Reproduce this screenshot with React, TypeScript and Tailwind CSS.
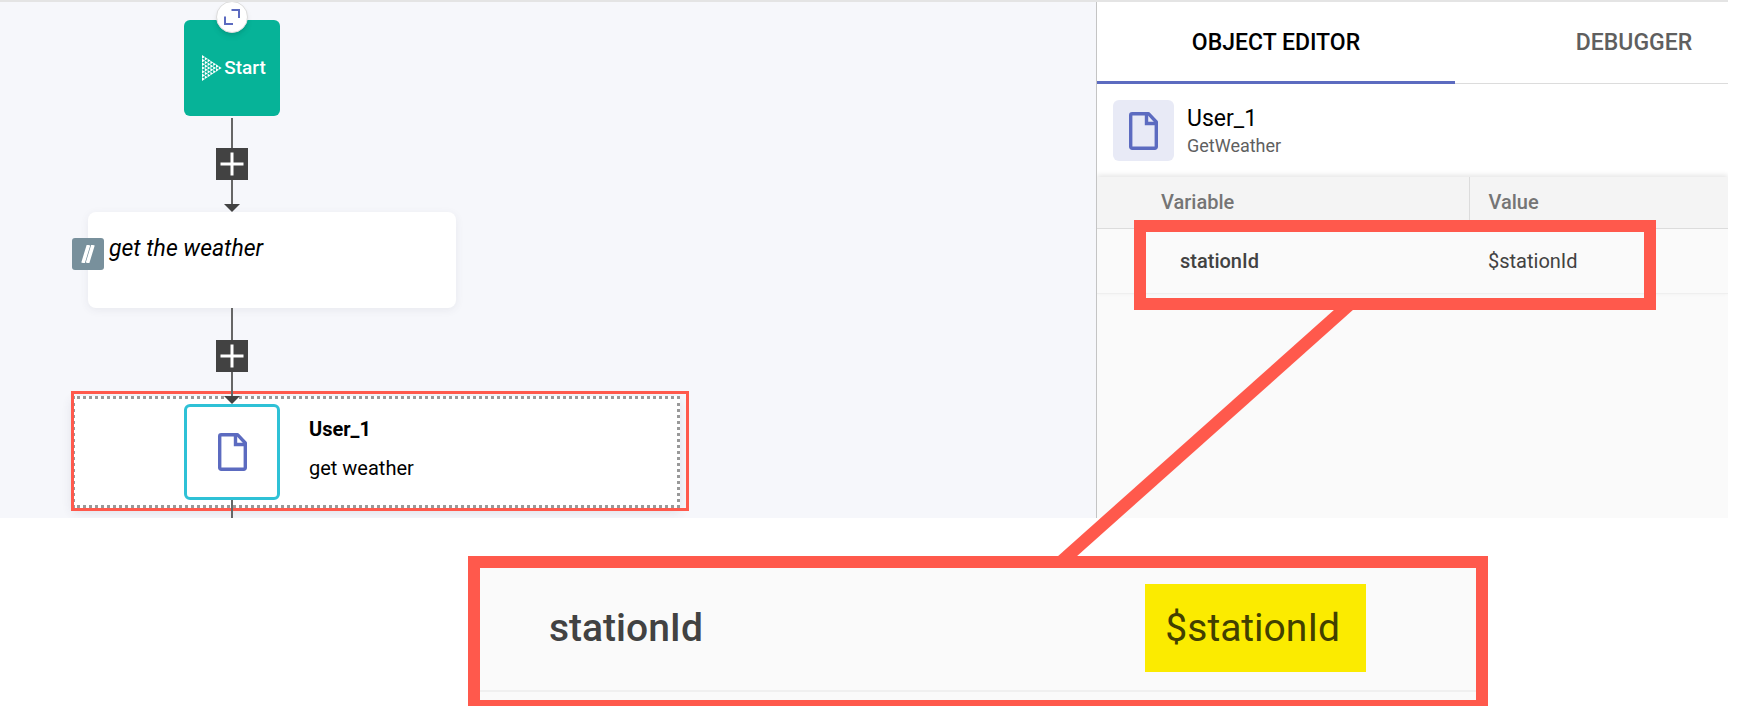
import React, { useState } from "react";

function DocumentIcon({ className }: { className: string }) {
  return (
    <svg viewBox="0 0 29 38" className={className} fill="none" stroke="#5c6bc0" strokeWidth="3.4" strokeLinejoin="round" aria-hidden="true">
      <path d="M3.2 1.7h16.3L27.3 10v24.800a1.500 1.500 0 0 1-1.500 1.500H3.200A1.500 1.500 0 0 1 1.700 34.800V3.200A1.500 1.500 0 0 1 3.200 1.700Z" />
      <path d="M17.500 2v9.500H27" strokeLinejoin="miter" />
    </svg>
  );
}

function StartIcon() {
  const columns = [7, 6, 5, 4, 3, 2, 1];
  return (
    <svg viewBox="0 0 20 26" className="h-[26px] w-5 shrink-0" fill="#fff" aria-hidden="true">
      {columns.map((count, c) =>
        Array.from({ length: count }, (_, r) => {
          const x = c * 2.8;
          const y = 13 + (r - (count - 1) / 2) * 3.7;
          return <path key={`${c}-${r}`} d={`M${x} ${y - 1.8}l2.9 1.8l-2.9 1.8z`} />;
        })
      )}
    </svg>
  );
}

function Connector({ first }: { first: string }) {
  return (
    <div className="flex w-8 flex-col items-center">
      <div className={`w-0.5 bg-[#666] ${first}`} />
      <button type="button" aria-label="Add step" className="flex size-8 items-center justify-center bg-[#424242]">
        <svg viewBox="0 0 24 24" className="size-6" stroke="#fff" strokeWidth="3" aria-hidden="true">
          <path d="M12 0.5v23M0.5 12h23" />
        </svg>
      </button>
      <div className="h-6 w-0.5 bg-[#666]" />
      <svg viewBox="0 0 16 8" className="h-2 w-4" fill="#424242" aria-hidden="true">
        <path d="M0 0h16L8 8z" />
      </svg>
    </div>
  );
}

function FlowCanvas() {
  return (
    <section className="relative min-w-0 flex-1 overflow-hidden bg-[#f6f7fb]">
      <div className="absolute left-[184px] top-[18px] flex size-24 items-center justify-center gap-0.5 rounded-md bg-[#06b398] pl-1">
        <StartIcon />
        <span className="text-[19px] font-medium text-white">Start</span>
      </div>
      <button
        type="button"
        aria-label="Expand"
        className="absolute left-[216px] top-[-1px] flex size-8 items-center justify-center rounded-full border border-[#dcdcdc] bg-white shadow-md"
      >
        <svg viewBox="0 0 16 16" className="size-4" fill="none" stroke="#5c6bc0" strokeWidth="2" aria-hidden="true">
          <path d="M7.5 1H15v8M1 7.5V15h8" />
        </svg>
      </button>
      <div className="absolute left-[216px] top-[116px]">
        <Connector first="h-[30px]" />
      </div>

      <div className="absolute left-[88px] top-[210px] h-24 w-[368px] rounded-lg bg-white pl-[21px] pt-[21px] shadow-[0_2px_8px_rgba(60,60,90,0.08)]">
        <p className="text-[23px] italic leading-8 text-black">get the weather</p>
      </div>
      <div className="absolute left-[72px] top-[236px] flex size-8 items-center justify-center rounded-[3px] bg-[#78909c]">
        <svg viewBox="0 0 14 18" className="h-[18px] w-3.5" stroke="#fff" strokeWidth="3.6" aria-hidden="true">
          <path d="M2 18L7.500 0M6.500 18L12 0" />
        </svg>
      </div>

      <div className="absolute left-[72px] top-[394px] h-28 w-[608px] border-[3px] border-dotted border-[#999] bg-white shadow-[0_4px_10px_rgba(60,60,90,0.12)]" />
      <div className="absolute left-[71px] top-[389px] h-[120px] w-[618px] border-[3px] border-[#ff594c]" />
      <div className="absolute left-[216px] top-[306px]">
        <Connector first="h-8" />
      </div>
      <div className="absolute left-[184px] top-[402px] flex items-center gap-[29px]">
        <div className="flex size-24 items-center justify-center rounded-md border-[3px] border-[#2fc1d6] bg-white">
          <DocumentIcon className="h-[38px] w-[29px]" />
        </div>
        <div className="flex flex-col gap-[15px] pb-2 text-xl leading-6 text-black">
          <h3 className="font-bold leading-6">User_1</h3>
          <p className="leading-6">get weather</p>
        </div>
      </div>
      <div className="absolute left-[231px] top-[498px] h-[18px] w-0.5 bg-[#666]" />
    </section>
  );
}

function Tab({ label, active, onClick }: { label: string; active: boolean; onClick: () => void }) {
  return (
    <button
      type="button"
      role="tab"
      aria-selected={active}
      onClick={onClick}
      className={`h-[82px] w-[358px] shrink-0 text-[23px] font-medium ${
        active ? "border-b-[3px] border-[#5c6bc0] pt-1 text-black" : "border-b border-[#dcdcdc] pt-0.5 text-[#5f5f5f]"
      }`}
    >
      {label}
    </button>
  );
}

function EditorPanel() {
  const [tab, setTab] = useState(0);
  return (
    <aside className="w-[632px] shrink-0 overflow-hidden border-l border-[#c4c4c4] bg-[#fafafa]">
      <div role="tablist" className="flex bg-white">
        <Tab label="OBJECT EDITOR" active={tab === 0} onClick={() => setTab(0)} />
        <Tab label="DEBUGGER" active={tab === 1} onClick={() => setTab(1)} />
      </div>
      <header className="flex h-[93px] items-start gap-[13px] bg-white pl-4 pt-4">
        <div className="flex size-[61px] items-center justify-center rounded-md bg-[#e8eaf6]">
          <DocumentIcon className="h-[38px] w-[29px]" />
        </div>
        <div className="pt-[5px]">
          <h2 className="text-[23px] leading-7 text-black">User_1</h2>
          <p className="text-lg leading-[26px] text-[#5f5f5f]">GetWeather</p>
        </div>
      </header>
      <table className="w-full table-fixed text-left text-xl text-[#424242] shadow-[0_-2px_5px_rgba(0,0,0,0.10)]">
        <thead>
          <tr className="h-[51px] border-b border-[#dcdcdc] bg-[#f4f4f4] text-[#757575]">
            <th className="w-[372px] border-r border-[#dcdcdc] pl-16 font-medium">Variable</th>
            <th className="pl-[19px] font-medium">Value</th>
          </tr>
        </thead>
        <tbody>
          <tr className="h-[65px] border-b border-[#efefef]">
            <th className="pl-[83px] font-medium">stationId</th>
            <td className="pl-[19px]">$stationId</td>
          </tr>
        </tbody>
      </table>
    </aside>
  );
}

export default function App() {
  return (
    <main className="relative overflow-hidden bg-white font-['Roboto',sans-serif]">
      <div className="mr-2.5 flex min-h-[518px] border-t-2 border-[#e4e4e4]">
        <FlowCanvas />
        <EditorPanel />
      </div>

      <div className="absolute left-[1134px] top-[220px] h-[90px] w-[522px] border-[12px] border-[#ff594c]" />
      <svg viewBox="0 0 297 248" className="absolute left-[1057px] top-[309px] h-[248px] w-[297px]" fill="#ff594c" aria-hidden="true">
        <path d="M278 0h19L19 248H0z" />
      </svg>

      <section className="ml-[468px] mt-[38px] w-[1020px] border-[12px] border-b-[6px] border-[#ff594c] bg-[#fafafa] pb-2">
        <div className="flex h-[124px] items-start justify-between border-b-2 border-[#f0f0f0] pl-[69px] pr-[110px] pt-4 text-[39px] leading-[76px]">
          <span className="py-1.5 font-medium text-[#424242]">stationId</span>
          <mark className="bg-[#fbeb00] py-1.5 pl-5 pr-[26px] text-[#424000]">$stationId</mark>
        </div>
      </section>
    </main>
  );
}
